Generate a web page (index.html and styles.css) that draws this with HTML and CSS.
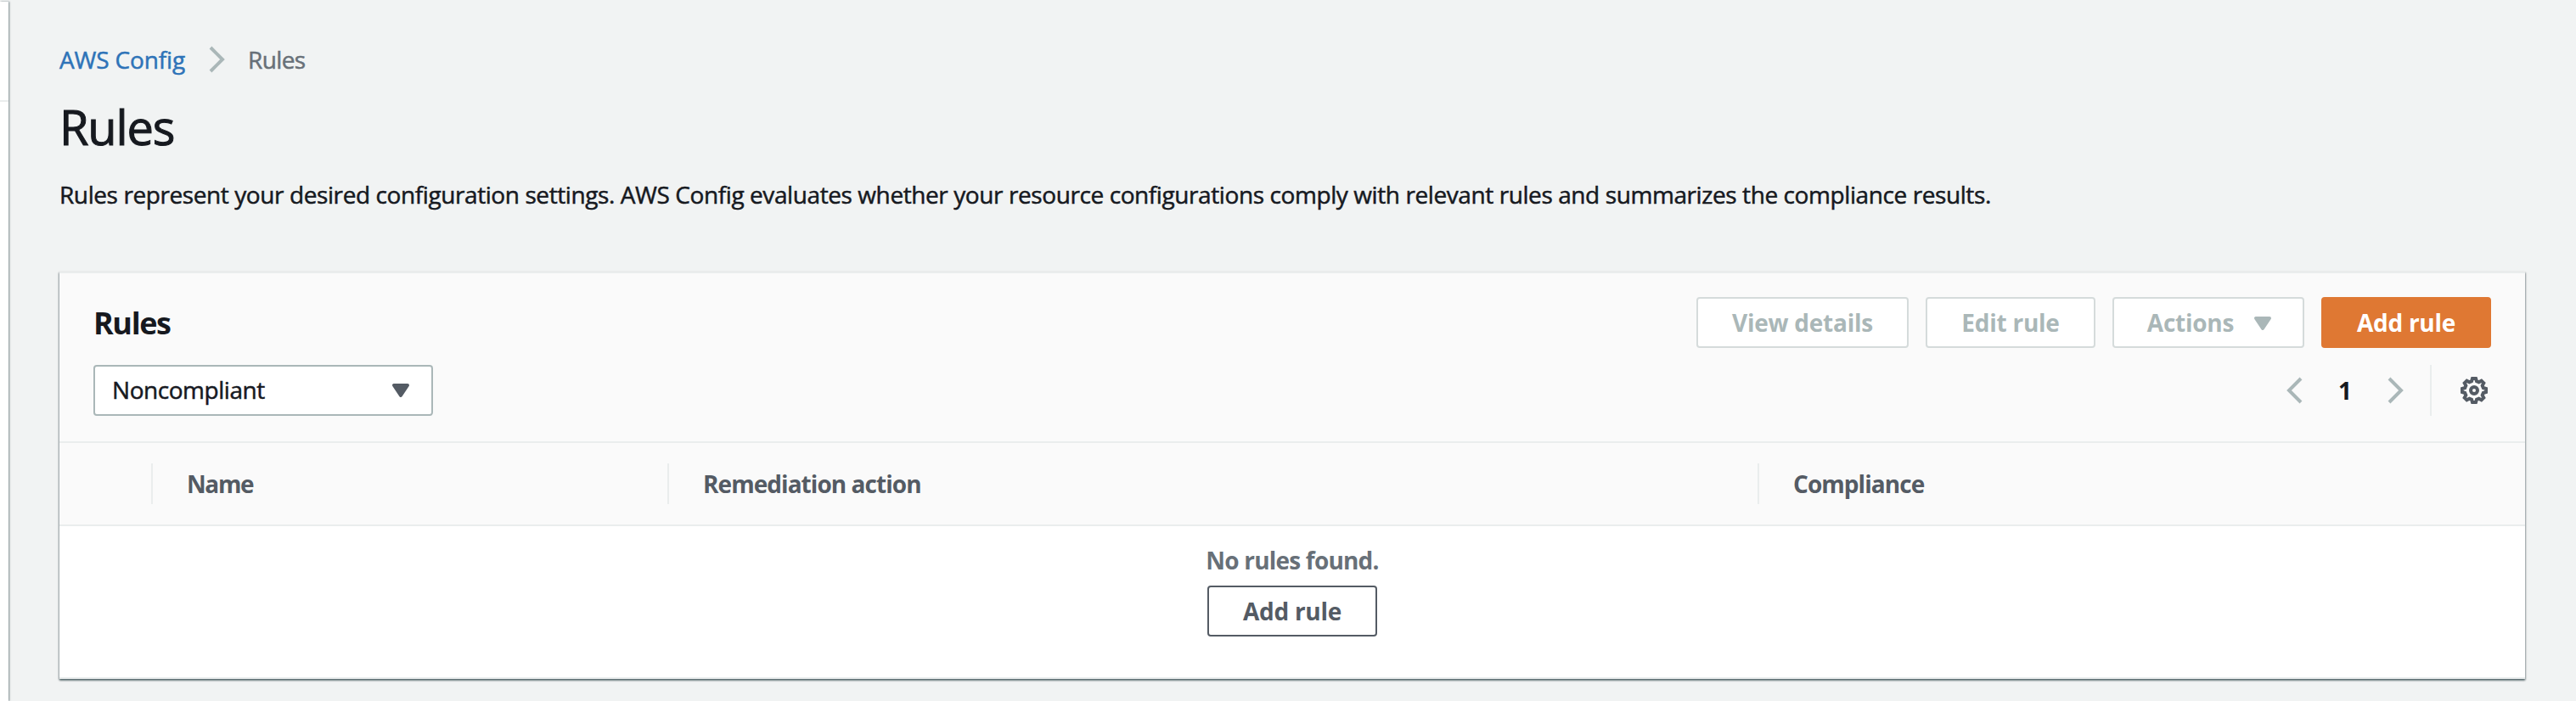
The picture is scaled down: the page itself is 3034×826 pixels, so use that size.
FILE: index.html
```html
<!DOCTYPE html>
<html lang="en">
<head>
<meta charset="utf-8">
<title>AWS Config - Rules</title>
<link rel="stylesheet" href="styles.css">
</head>
<body>
<div class="app">
  <aside class="nav-edge"><div class="nav-divider"></div></aside>
  <main class="content">
    <nav class="breadcrumb">
      <a class="crumb-link" href="#">AWS Config</a>
      <svg class="crumb-sep" width="32" height="32" viewBox="0 0 32 32"><path d="M8 2l14 14L8 30"/></svg>
      <span class="crumb-current">Rules</span>
    </nav>
    <h1 class="title">Rules</h1>
    <p class="description">Rules represent your desired configuration settings. AWS Config evaluates whether your resource configurations comply with relevant rules and summarizes the compliance results.</p>

    <section class="panel">
      <header class="panel-header">
        <div class="header-row">
          <h2 class="panel-title">Rules</h2>
          <div class="actions">
            <button class="btn btn-disabled btn-view">View details</button>
            <button class="btn btn-disabled btn-edit">Edit rule</button>
            <button class="btn btn-disabled btn-actions">Actions
              <svg class="caret" width="32" height="32" viewBox="0 0 32 32"><path d="M8 11h16l-8 12z"/></svg>
            </button>
            <button class="btn btn-primary">Add rule</button>
          </div>
        </div>
        <div class="header-row filter-row">
          <div class="select">
            <span>Noncompliant</span>
            <svg class="caret" width="32" height="32" viewBox="0 0 32 32"><path d="M8 11h16l-8 12z"/></svg>
          </div>
          <div class="tools">
            <svg class="chevron" width="32" height="32" viewBox="0 0 32 32"><path d="M24 2L10 16l14 14"/></svg>
            <span class="page">1</span>
            <svg class="chevron" width="32" height="32" viewBox="0 0 32 32"><path d="M8 2l14 14L8 30"/></svg>
            <div class="tools-divider"></div>
            <svg class="gear" width="32" height="32" viewBox="0 0 32 32">
              <path d="M14 2h4l1 3.2 2.6 1.1 3-1.6 2.7 2.7-1.6 3 1.1 2.6L30 14v4l-3.2 1-1.1 2.6 1.6 3-2.7 2.7-3-1.6-2.6 1.1L18 30h-4l-1-3.2-2.6-1.1-3 1.6-2.7-2.7 1.6-3L5.2 19 2 18v-4l3.2-1 1.1-2.6-1.6-3 2.7-2.7 3 1.6L13 5.2z"/>
              <circle cx="16" cy="16" r="4"/>
            </svg>
          </div>
        </div>
      </header>
      <div class="columns">
        <div class="col col-select"></div>
        <div class="col col-name">Name</div>
        <div class="col col-remediation">Remediation action</div>
        <div class="col col-compliance">Compliance</div>
      </div>
      <div class="empty">
        <div class="empty-text">No rules found.</div>
        <button class="btn btn-normal">Add rule</button>
      </div>
    </section>
  </main>
</div>
</body>
</html>
```
FILE: styles.css
```css
* { box-sizing: border-box; }
body {
  margin: 0;
  height: 826px;
  overflow: hidden;
  background: #f2f3f3;
  color: #16191f;
  font: 400 28px/40px "Open Sans", "Noto Sans", sans-serif;
}
.app { display: flex; height: 826px; background: #f1f3f3; }
.nav-edge {
  width: 10px;
  flex: none;
  margin-top: 2px;
  background: #fff;
  box-shadow: 1px 0 2px 0 rgba(0, 28, 36, .5);
}
.nav-divider { height: 118px; border-bottom: 2px solid #eaeded; }
.content { flex: 1; padding: 50px 60px 0; }

.breadcrumb, .description, .select { -webkit-text-stroke: .5px currentColor; }
.breadcrumb { display: flex; align-items: center; height: 40px; }
.crumb-link { color: #2e73b8; text-decoration: none; letter-spacing: -.15px; width: 152px; white-space: nowrap; }
.crumb-sep { margin: 0 20px 0 18px; }
.crumb-sep path, .chevron path { fill: none; stroke: #aab7b8; stroke-width: 4; }
.crumb-current { color: #687078; letter-spacing: -.6px; }

.title { margin: 24px 0 0; font-size: 56px; line-height: 70px; font-weight: 400; letter-spacing: -1.2px; -webkit-text-stroke: 1px currentColor; }
.description { margin: 25px 0 0; letter-spacing: -.41px; white-space: nowrap; }

.panel {
  width: 2904px;
  height: 480px;
  margin-top: 71px;
  background: #fff;
  border-top: 2px solid #eaeded;
  border-bottom: 2px solid #eaeded;
  box-shadow: 0 2px 2px 0 rgba(0, 28, 36, .45), 1px 1px 2px 0 rgba(0, 28, 36, .25), -1px 1px 2px 0 rgba(0, 28, 36, .25);
}
.panel-header { height: 200px; padding: 28px 40px 0; background: #fafafa; border-bottom: 2px solid #eaeded; }
.header-row { display: flex; justify-content: space-between; align-items: flex-start; height: 60px; }
.filter-row { margin-top: 20px; }
.panel-title { margin: 7px 0 0; font-size: 36px; line-height: 48px; font-weight: 700; letter-spacing: -1.4px; }
.actions { display: flex; gap: 20px; }

.btn {
  display: flex;
  align-items: center;
  justify-content: center;
  height: 60px;
  padding: 0 0 1px;
  border: 2px solid #545b64;
  border-radius: 4px;
  background: #fff;
  color: #545b64;
  font: 700 28px/40px "Open Sans", "Noto Sans", sans-serif;
  letter-spacing: -.25px;
  white-space: nowrap;
}
.btn-disabled { color: #aab7b8; border-color: #d5dbdb; }
.btn-view { width: 250px; }
.btn-edit { width: 200px; }
.btn-actions { width: 226px; gap: 18px; padding-left: 8px; }
.btn-primary { width: 200px; background: #df7833; border-color: #df7833; color: #fff; }
.btn-normal { width: 200px; }
.caret { fill: currentColor; stroke: currentColor; stroke-width: 4; stroke-linejoin: round; }

.select {
  display: flex;
  align-items: center;
  justify-content: space-between;
  width: 400px;
  height: 60px;
  padding: 0 20px 2px;
  background: #fff;
  border: 2px solid #aab7b8;
  border-radius: 4px;
  letter-spacing: -.45px;
}
.select .caret { color: #545b64; }
.tools { display: flex; align-items: center; height: 60px; }
.page { width: 88px; text-align: center; font-weight: 700; padding-bottom: 1px; }
.tools-divider { width: 2px; height: 60px; margin: 0 34px 0 24px; background: #eaeded; }
.gear { margin-right: 4px; }
.gear path, .gear circle { fill: none; stroke: #545b64; stroke-width: 4; }

.columns { display: flex; align-items: center; height: 98px; background: #fafafa; border-bottom: 2px solid #eaeded; }
.col { height: 48px; padding: 4px 0 0 40px; border-right: 2px solid #eaeded; color: #545b64; font-weight: 700; letter-spacing: -.95px; }
.col-select { width: 110px; }
.col-name { width: 608px; letter-spacing: -1.4px; }
.col-remediation { width: 1284px; }
.col-compliance { flex: 1; border-right: 0; }

.empty { display: flex; flex-direction: column; align-items: center; padding-top: 20px; }
.empty-text { color: #687078; font-weight: 700; letter-spacing: -.8px; }
.empty .btn { margin-top: 10px; }
```
